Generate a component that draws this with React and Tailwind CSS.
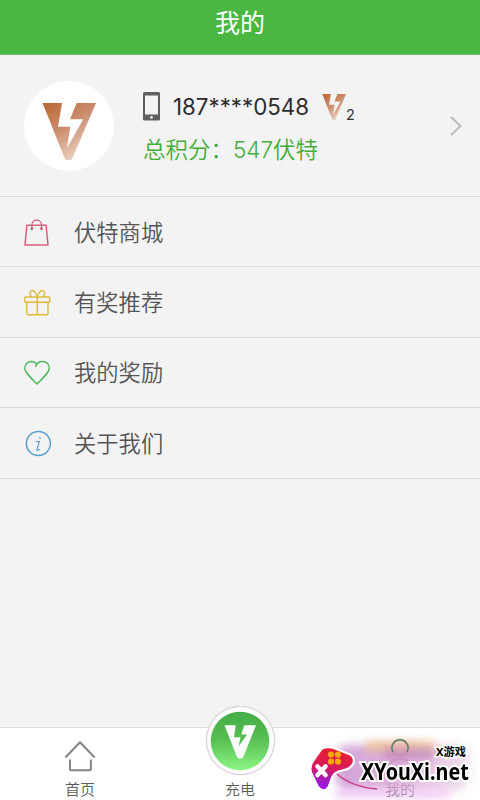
import { useId } from 'react';

const menuItems = [
  { label: '伏特商城', icon: BagIcon },
  { label: '有奖推荐', icon: GiftIcon },
  { label: '我的奖励', icon: HeartIcon },
  { label: '关于我们', icon: InfoIcon },
];

function VoltLogo({ className }) {
  const id = useId();
  return (
    <svg viewBox="0 0 54 57" preserveAspectRatio="none" className={className}>
      <defs>
        <linearGradient id={id} x1="0" y1="0" x2="0.6" y2="1">
          <stop offset="0" stopColor="#bb6532" />
          <stop offset="0.5" stopColor="#cb8e6e" />
          <stop offset="1" stopColor="#ecd2c4" />
        </linearGradient>
      </defs>
      <path
        fill={`url(#${id})`}
        d="M.5 0H20L16 23.7H28.3L25 45L41.3 16.3H28L34.7 0H54L30 56Q29.6 57 28.5 57H24.5Q23.4 57 23 56Z"
      />
    </svg>
  );
}

function PhoneIcon() {
  return (
    <svg viewBox="0 0 17 29" className="h-[29px] w-[17px] shrink-0">
      <path
        fill="#5f5f5f"
        fillRule="evenodd"
        d="M1.5 0H15.5Q17 0 17 1.5V27Q17 28.5 15.5 28.5H1.5Q0 28.5 0 27V1.5Q0 0 1.5 0ZM2 3.5V22.5H15V3.5Z"
      />
      <circle cx="8.5" cy="25.4" r="1.4" fill="#e8e8e8" />
    </svg>
  );
}

function BagIcon() {
  return (
    <svg viewBox="0 0 28 28" className="size-7" fill="none" stroke="#d8607c" strokeWidth="1.5" strokeLinejoin="round">
      <path d="M3.9 6.2H23.1L25 26H2Z" />
      <path d="M8.9 9.5V6.2C8.9 -.6 18.5 -.6 18.5 6.2V9.5" strokeWidth="1.2" />
      <circle cx="8.9" cy="9.7" r=".7" />
      <circle cx="18.5" cy="9.7" r=".7" />
    </svg>
  );
}

function GiftIcon() {
  return (
    <svg viewBox="0 0 28 28" className="size-7" fill="none" stroke="#dfb93c" strokeWidth="1.4" strokeLinejoin="round">
      <rect x="1.6" y="8" width="25.2" height="5.2" rx="1" />
      <path d="M3.8 13.2V24.4Q3.8 25.8 5.2 25.8H23.6Q25 25.8 25 24.4V13.2M14.3 8V25.8" />
      <path d="M14.3 8C12.6 2.7 10.3 .9 8.3 1.8C5.9 3 7 6 8.6 8M14.3 8C16 2.7 18.3 .9 20.3 1.8C22.7 3 21.6 6 20 8" />
    </svg>
  );
}

function HeartIcon() {
  return (
    <svg viewBox="0 0 28 28" className="size-7" fill="none" stroke="#51b760" strokeWidth="1.4" strokeLinecap="round" strokeLinejoin="round">
      <path d="M12.6 7.5C13.8 4.3 16.4 2.4 19.6 2.5C23.8 2.6 26.5 5.5 26.3 9.4C26.1 13 22.5 16.7 14 25C5.5 16.7 1.9 13 1.7 9.4C1.5 5.5 4.5 2.6 8.3 2.5C10.5 2.5 12.5 3.4 13.8 5.3" />
    </svg>
  );
}

function InfoIcon() {
  return (
    <svg viewBox="0 0 28 28" className="size-7" fill="none" stroke="#579fc9" strokeWidth="1.5">
      <circle cx="15.4" cy="13.5" r="12" />
      <path d="M12.6 11.5H16.3L13.9 19.8Q13.7 20.9 16.9 19.2" strokeWidth="1.2" />
      <circle cx="16.9" cy="7.8" r=".9" fill="#579fc9" stroke="none" />
    </svg>
  );
}

function TabBar() {
  return (
    <nav className="relative grid h-[73px] grid-cols-3 border-t border-[#dcdcdc] bg-white text-[15px] leading-5 font-[350] text-[#5c5c5c]">
      <div className="flex flex-col items-center pt-3">
        <svg viewBox="0 0 32 32" className="size-8" fill="none" stroke="#858585" strokeWidth="2">
          <path d="M1.3 17.5L16 2.3L30.7 17.5M6 19.5V29.3Q6 30.2 6.9 30.2H26Q26.9 30.2 26.9 29.3V19.5" />
        </svg>
        <span className="mt-2">首页</span>
      </div>
      <div className="flex flex-col items-center">
        <div className="-mt-[22px] flex size-[69px] shrink-0 items-center justify-center rounded-full border border-[#d8cddd] bg-white shadow-[0_0_2px_#ddd]">
          <svg viewBox="0 0 60 60" className="size-[60px]">
            <defs>
              <linearGradient id="charge" x1="0" y1="0" x2="0" y2="1">
                <stop offset="0" stopColor="#43ad49" />
                <stop offset="0.45" stopColor="#55bd51" />
                <stop offset="1" stopColor="#8bf584" />
              </linearGradient>
            </defs>
            <circle cx="30" cy="30" r="29.3" fill="url(#charge)" />
            <path fill="#fff" d="M14.5 14.2H25.8L24 26.3H30.5L28.5 35.5L37.2 23.5H31.3L34.3 14.2H46L33.3 46Q32.8 47.4 31.3 47.4H29Q27.5 47.4 27 46Z" />
          </svg>
        </div>
        <span className="mt-[5px]">充电</span>
      </div>
      <div className="flex flex-col items-center pt-3">
        <svg viewBox="0 0 32 32" className="size-8" fill="none" stroke="#4d7b61" strokeWidth="2">
          <circle cx="16" cy="8" r="8" />
          <path d="M2 31C3 15 29 15 30 31" />
        </svg>
        <span className="mt-2">我的</span>
      </div>
      <Watermark />
    </nav>
  );
}

function Watermark() {
  return (
    <div className="absolute right-0 bottom-0 h-20 w-[180px] overflow-hidden">
      <div className="absolute top-[25px] left-[36px] h-[45px] w-[134px] rounded-xl bg-linear-to-r from-[#cb9ad3] via-[#dfabd9] to-[#eddfed] opacity-90 blur-[5px]" />
      <div className="absolute top-[21px] left-[66px] h-2.5 w-[68px] bg-[#eebd78] opacity-70 blur-[4px]" />
      <div className="absolute top-[28px] left-[84px] h-3 w-[50px] bg-[#b879b4] opacity-60 blur-[4px]" />
      <div className="absolute top-[70px] left-[35px] h-2 w-[115px] bg-[#efb5f2] opacity-70 blur-[4px]" />
      <svg viewBox="0 0 180 80" className="absolute inset-0 h-20 w-[180px]" fill="none">
        <defs>
          <linearGradient id="pad" x1="0.5" y1="0" x2="0.35" y2="1">
            <stop offset="0" stopColor="#e6202e" />
            <stop offset="0.5" stopColor="#d91960" />
            <stop offset="0.78" stopColor="#a51bc3" />
            <stop offset="1" stopColor="#9b16ef" />
          </linearGradient>
        </defs>
        <path d="M93 32A8.2 8.2 0 1 1 107 32" stroke="#4d7b61" strokeWidth="1.6" opacity=".8" />
        <path d="M164 31Q171 31 171 38V57Q171 69 160 70" stroke="#fff" strokeWidth="1.5" opacity=".6" />
        <path d="M37 54Q52 67 77 69" stroke="#cf3789" strokeWidth="1.5" />
        <path
          d="M22 28.5Q28 26 35 28.5L49 34Q55 36.5 53.5 43Q51 49 42 50.5Q34.5 51.5 32 57.5L28.5 67Q23 74 17.5 66L11.5 53.5Q8.5 46 14.5 39Z"
          fill="url(#pad)"
          stroke="#fff"
          strokeWidth="2"
          strokeLinejoin="round"
        />
        <g fill="#ffa400">
          <circle cx="31" cy="34.5" r="3.1" />
          <circle cx="38" cy="34.5" r="3.1" />
          <circle cx="31" cy="41.5" r="3.1" />
          <circle cx="38" cy="41.5" r="3.1" />
        </g>
        <path d="M17.5 46.5L25.5 55M25.5 46.5L17.5 55" stroke="#fff" strokeWidth="4.5" strokeLinecap="round" />
      </svg>
      <span className="absolute top-[22px] left-[136px] font-['Noto_Sans','Noto_Sans_CJK_SC',sans-serif] text-[11.2px] leading-5 font-bold whitespace-nowrap text-black [paint-order:stroke_fill] [-webkit-text-stroke:3px_white]">
        X游戏
      </span>
      <span className="absolute top-[37px] left-[61px] origin-left scale-x-[0.86] font-['Noto_Sans',sans-serif] text-[23px] leading-7 font-bold whitespace-nowrap text-black [paint-order:stroke_fill] [-webkit-text-stroke:4px_white]">
        XYouXi.net
      </span>
    </div>
  );
}

export default function App() {
  return (
    <div className="flex h-[800px] w-[480px] flex-col overflow-hidden bg-[#f3f3f3] font-['Inter','Noto_Sans_CJK_SC',sans-serif]">
      <header className="flex h-[55px] shrink-0 justify-center border-b border-[#78bd72] bg-[#4ab742] pt-2 text-white">
        <h1 className="text-[25px] leading-[30px] font-normal">我的</h1>
      </header>

      <section className="flex h-[142px] shrink-0 items-center border-b border-[#d9d9d9] pr-[18px] pl-6">
        <div className="flex size-[90px] shrink-0 justify-center rounded-full bg-white pt-[22px]">
          <VoltLogo className="h-[57px] w-[54px]" />
        </div>
        <div className="ml-[29px] flex-1 pt-[5px]">
          <div className="flex h-[30px] items-center">
            <PhoneIcon />
            <span className="ml-[13px] w-[137px] pt-px text-[22.3px] leading-7 whitespace-nowrap text-[#2c2c2c]">187****0548</span>
            <VoltLogo className="ml-3 h-[26px] w-[24px]" />
            <span className="mt-[17px] text-[14.5px] leading-5 text-[#333]">2</span>
          </div>
          <p className="mt-[13px] text-[22.5px] leading-[30px] font-[350] whitespace-nowrap text-[#41ad3a]">总积分：547伏特</p>
        </div>
        <svg viewBox="0 0 12 20" className="h-5 w-3" fill="none" stroke="#bcbcbc" strokeWidth="2">
          <path d="M1 1L10.5 10L1 19" />
        </svg>
      </section>

      <ul className="flex-1">
        {menuItems.map(({ label, icon: Icon }) => (
          <li key={label} className="flex h-[70.4px] items-center border-b border-[#d9d9d9] pt-0.5 pl-[23px] text-[22.3px] font-[350] text-[#555]">
            <Icon />
            <span className="ml-[23px] leading-8">{label}</span>
          </li>
        ))}
      </ul>

      <TabBar />
    </div>
  );
}
